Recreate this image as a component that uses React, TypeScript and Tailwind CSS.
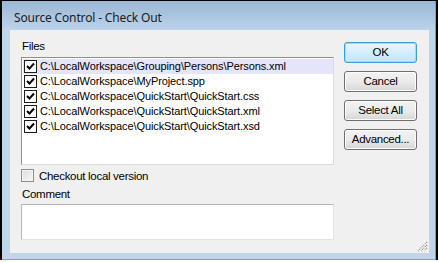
import React from "react";

const files = [
  "C:\\LocalWorkspace\\Grouping\\Persons\\Persons.xml",
  "C:\\LocalWorkspace\\MyProject.spp",
  "C:\\LocalWorkspace\\QuickStart\\QuickStart.css",
  "C:\\LocalWorkspace\\QuickStart\\QuickStart.xml",
  "C:\\LocalWorkspace\\QuickStart\\QuickStart.xsd",
];

function Check() {
  return (
    <span className="w-[13px] h-[13px] shrink-0 bg-white border border-[#1e1e1e] flex items-center justify-center">
      <svg width="9" height="9" viewBox="0 0 9 9">
        <path d="M1 4 L3.5 6.5 L8 1.5" stroke="#000" strokeWidth="2" fill="none" />
      </svg>
    </span>
  );
}

function Btn({ label, primary }: { label: string; primary?: boolean }) {
  return (
    <div
      className={
        "w-[73px] h-[21px] rounded-[3px] border flex items-center justify-center text-[11.5px] tracking-[-0.3px] text-black " +
        (primary
          ? "border-[#3c9fd6] bg-gradient-to-b from-[#eaf6fd] to-[#bee6fd] shadow-[inset_0_0_0_1px_#9fdcf9]"
          : "border-[#707070] bg-gradient-to-b from-[#f2f2f2] via-[#ebebeb] to-[#d6d6d6] shadow-[inset_0_0_0_1px_#fcfcfc]")
      }
    >
      {label}
    </div>
  );
}

export default function App() {
  return (
    <div
      className="w-[438px] h-[262px] bg-black flex flex-col"
      style={{ fontFamily: '"Liberation Sans", Arial, sans-serif' }}
    >
      <div className="h-[259px] ml-[2px] mr-[2px] mt-[1px] bg-[#bed5ea] border-r border-b border-[#2fc3db] flex flex-col">
        <div className="h-[29px] shrink-0 bg-gradient-to-b from-[#9bb7d5] to-[#bcd3ea] flex items-center pl-[12px]">
          <span className="text-[12px] tracking-[-0.15px] text-[#1b1b1b] pt-[4px]" style={{ fontFamily: '"Noto Sans", "Open Sans", sans-serif' }}>
            Source Control - Check Out
          </span>
        </div>
        <div className="ml-[8px] w-[419px] h-[223px] bg-[#f0f0f0] relative flex">
          <div className="flex flex-col pl-[11px] w-[324px]">
            <div className="text-[11.5px] tracking-[-0.3px] leading-[14px] mt-[9px] ml-[1px]">Files</div>
            <div className="mt-[4px] w-[313px] h-[108px] bg-white border-t border-l border-[#8e8f8f] border-r border-b border-r-[#dcdcdc] border-b-[#dcdcdc] pt-[1px] pl-[1px]">
              {files.map((f, i) => (
                <div
                  key={i}
                  className={
                    "h-[15px] flex items-center gap-[3px] pl-[1px] text-[11px] tracking-[-0.1px] text-black " +
                    (i === 0 ? "bg-[#e4e4fb]" : "")
                  }
                >
                  <Check />
                  <span className="leading-[15px]">{f}</span>
                </div>
              ))}
            </div>
            <div className="mt-[4px] flex items-center gap-[5px] h-[13px]">
              <span className="w-[13px] h-[13px] border border-[#8f8f8f] bg-gradient-to-br from-[#dcdcdc] to-[#f8f8f8] shadow-[inset_0_0_0_1px_#f4f4f4]" />
              <span className="text-[11.5px] tracking-[-0.3px] leading-[14px]">Checkout local version</span>
            </div>
            <div className="text-[11.5px] tracking-[-0.3px] leading-[14px] mt-[5px] ml-[1px]">Comment</div>
            <div className="mt-[3px] w-[313px] h-[36px] bg-white border-t border-l border-[#b5b5b5] border-r border-b border-r-[#e3e3e3] border-b-[#e3e3e3]" />
          </div>
          <div className="flex flex-col gap-[8px] pt-[12px] ml-[10px]">
            <Btn label="OK" primary />
            <Btn label="Cancel" />
            <Btn label="Select All" />
            <Btn label="Advanced..." />
          </div>
          <svg className="absolute right-[1px] bottom-[1px]" width="11" height="11" viewBox="0 0 11 11">
            <path d="M10 1 L1 10 M10 4 L4 10 M10 7 L7 10" stroke="#8a8a8a" strokeWidth="1.2" strokeDasharray="1 1" />
            <path d="M10 2 L2 10 M10 5 L5 10 M10 8 L8 10" stroke="#ffffff" strokeWidth="1" strokeDasharray="1 1" />
          </svg>
        </div>
      </div>
      <div className="h-[2px] bg-white" />
    </div>
  );
}
